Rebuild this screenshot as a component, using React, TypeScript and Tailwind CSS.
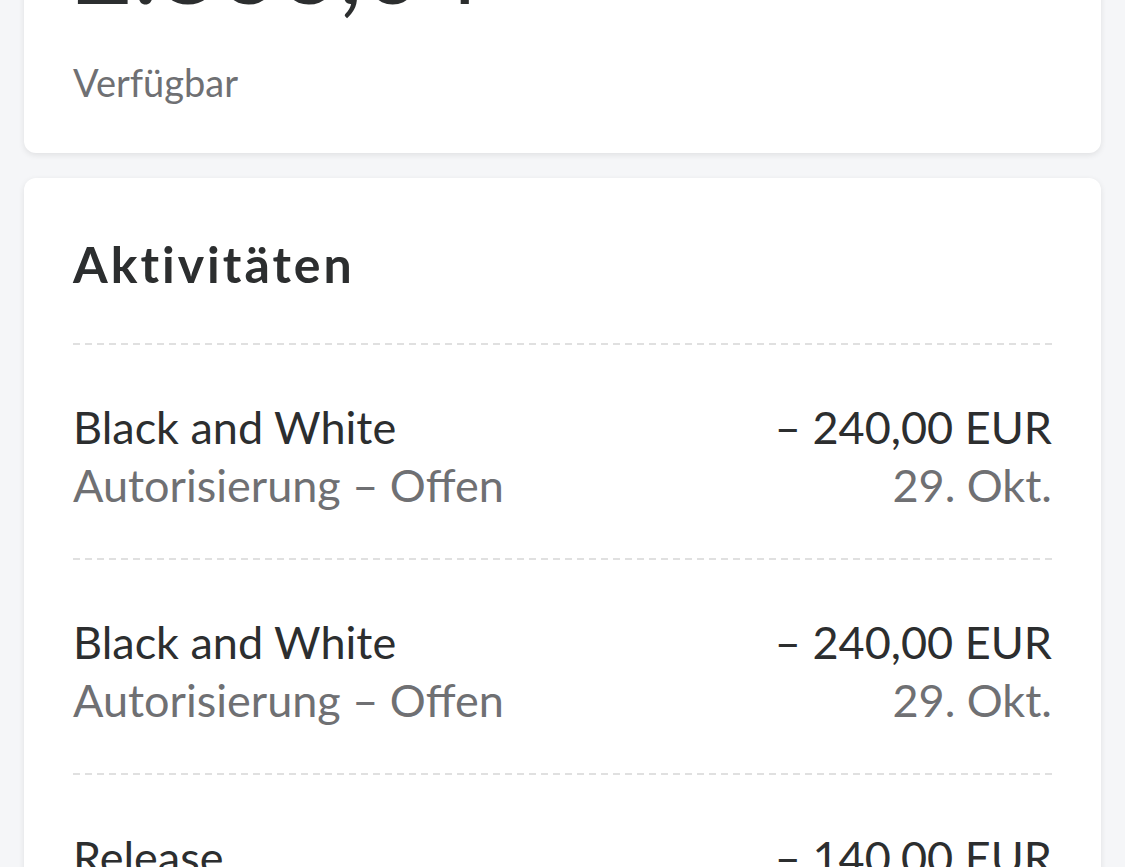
const activities = [
  { name: "Black and White", status: "Autorisierung – Offen", amount: "– 240,00 EUR", date: "29. Okt." },
  { name: "Black and White", status: "Autorisierung – Offen", amount: "– 240,00 EUR", date: "29. Okt." },
  { name: "Release", status: "Autorisierung – Offen", amount: "– 140,00 EUR", date: "28. Okt." },
];

function Dashed() {
  return <div className="h-[2px] bg-[repeating-linear-gradient(to_right,#e0e0e0_0_7px,transparent_7px_12px)]"></div>;
}

export default function App() {
  return (
    <div className="min-h-screen overflow-hidden bg-[#f5f6f8] px-6 font-['Lato',sans-serif] text-[#2c2e2f]">
      {/* Balance */}
      <div className="-mt-[88px] rounded-xl bg-white px-[49px] pb-[47px] shadow-[0_2px_6px_rgba(0,0,0,0.09)]">
        <div className="text-[104px] leading-none">2.866,04</div>
        <div className="mt-[44px] text-[38px] leading-[1.2] text-[#6f7073]">Verfügbar</div>
      </div>

      {/* Activities */}
      <div className="mt-[25px] rounded-xl bg-white px-[49px] pt-[56px] shadow-[0_2px_6px_rgba(0,0,0,0.09)]">
        <h2 className="text-[50px] font-bold leading-[1.2] tracking-[3px]">Aktivitäten</h2>
        <div className="mt-[49px]">
          {activities.map((a, i) => (
            <div key={i}>
              <Dashed />
              <div className="flex justify-between pt-[53px] pb-[44px] text-[45px] leading-[58px]">
                <div>
                  <div>{a.name}</div>
                  <div className="text-[#6f7073]">{a.status}</div>
                </div>
                <div className="text-right">
                  <div>{a.amount}</div>
                  <div className="text-[#6f7073]">{a.date}</div>
                </div>
              </div>
            </div>
          ))}
        </div>
      </div>
    </div>
  );
}
